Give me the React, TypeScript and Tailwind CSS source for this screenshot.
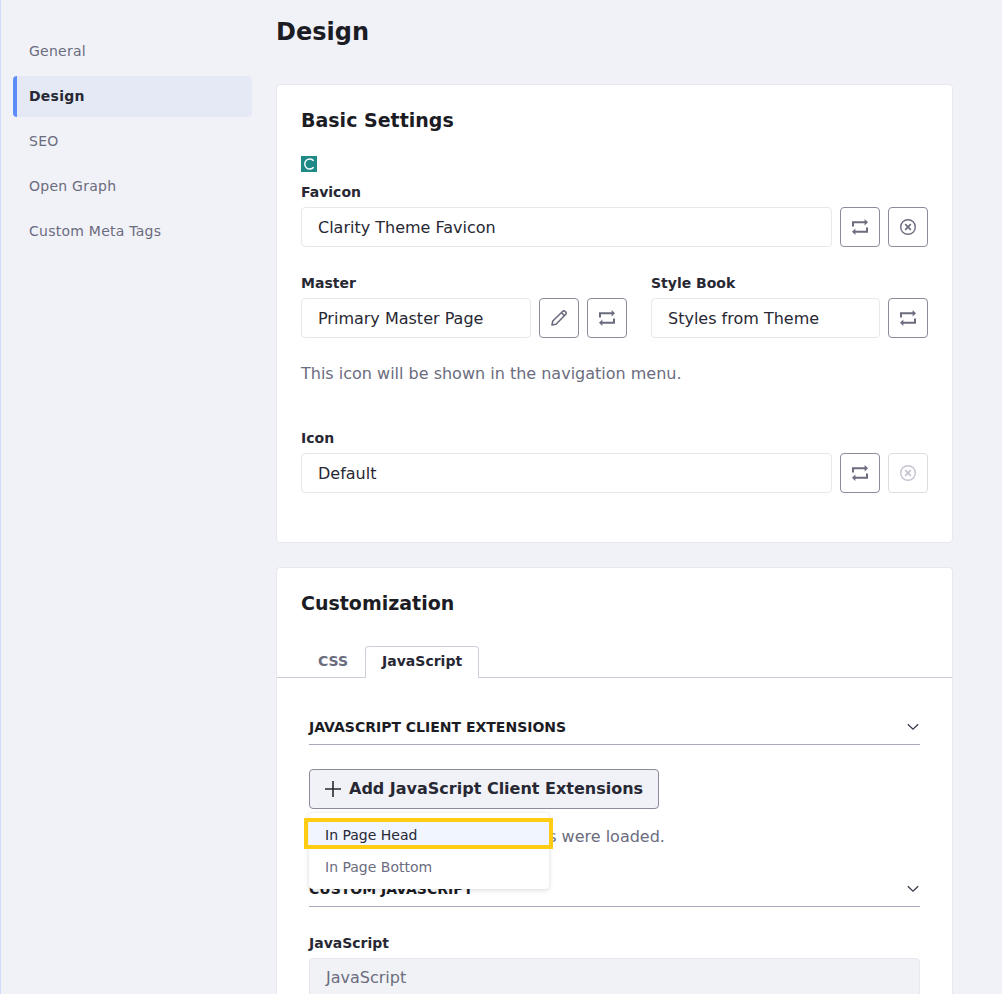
const font = { fontFamily: '"DejaVu Sans", sans-serif' };

function Change() {
  return (
    <svg width="16" height="16" viewBox="0 0 16 16" fill="none">
      <path d="M1 7.5V3.2H13.5" stroke="#6b6c7e" strokeWidth="2" />
      <path d="M12.6 0 L16 3.2 L12.6 6.4Z" fill="#6b6c7e" />
      <path d="M15 8.5V12.8H2.5" stroke="#6b6c7e" strokeWidth="2" />
      <path d="M3.4 9.6 L0 12.8 L3.4 16Z" fill="#6b6c7e" />
    </svg>
  );
}

function Times({ muted = false }: { muted?: boolean }) {
  const c = muted ? "#c4c4cf" : "#6b6c7e";
  return (
    <svg width="16" height="16" viewBox="0 0 16 16" fill="none" stroke={c} strokeWidth="1.4">
      <circle cx="8" cy="8" r="7.3" />
      <path d="M5.2 5.2 L10.8 10.8 M10.8 5.2 L5.2 10.8" strokeWidth="1.7" />
    </svg>
  );
}

function Pencil() {
  return (
    <svg width="16" height="16" viewBox="0 0 16 16" fill="none" stroke="#6b6c7e" strokeWidth="1.6" strokeLinejoin="round">
      <path d="M1 15 L1.8 11 L11.8 1.2 Q12.8 0.4 13.9 1.3 L14.9 2.3 Q15.6 3.3 14.8 4.2 L5 14.2 Z" />
      <path d="M10.5 2.8 L13.3 5.6" />
    </svg>
  );
}

function Chevron() {
  return (
    <svg width="12" height="12" viewBox="0 0 12 12" fill="none" stroke="#393a4a" strokeWidth="1.3" className="mr-px">
      <path d="M0.8 3.2 L6 8.2 L11.2 3.2" />
    </svg>
  );
}

function IconBtn({ children, disabled = false }: { children: React.ReactNode; disabled?: boolean }) {
  return (
    <button
      className={
        "flex h-10 w-10 shrink-0 items-center justify-center rounded border bg-white " +
        (disabled ? "border-[#dcdce3]" : "border-[#8e8a9c]")
      }
    >
      {children}
    </button>
  );
}

function Label({ children }: { children: React.ReactNode }) {
  return <div className="mb-[7px] h-[15px] text-sm leading-[15px] font-bold text-[#272833]">{children}</div>;
}

function Field({ children, className = "" }: { children: React.ReactNode; className?: string }) {
  return (
    <div
      className={
        "flex h-10 min-w-0 items-center rounded border border-[#e7e7ed] bg-white px-4 pt-px text-base text-[#272833] " + className
      }
    >
      {children}
    </div>
  );
}

function SectionHead({ children }: { children: React.ReactNode }) {
  return (
    <div className="flex h-[34px] items-center justify-between border-b border-[#a7a9bc] pb-[2px]">
      <span className="text-sm leading-4 font-bold text-[#1c1c24]">{children}</span>
      <Chevron />
    </div>
  );
}

const nav = ["General", "Design", "SEO", "Open Graph", "Custom Meta Tags"];

export default function App() {
  return (
    <div style={font} className="flex h-[994px] overflow-hidden border-l border-[#cfdcfb] bg-[#f1f2f7]">
      <nav className="ml-3 flex w-[239px] shrink-0 flex-col gap-1 pt-[31px]">
        {nav.map((n) => (
          <div
            key={n}
            className={
              "flex h-[41px] items-center rounded pb-[2px] text-sm tracking-[0.25px] " +
              (n === "Design"
                ? "border-l-4 border-[#5c8dfb] bg-[#e4e9f5] pl-3 font-bold tracking-[0.2px] text-[#272833]"
                : "pl-4 text-[#6b6c7e]")
            }
          >
            {n}
          </div>
        ))}
      </nav>
      <main className="ml-6 w-[677px] shrink-0">
        <h1 className="mt-[18px] mb-[10px] h-[56px] text-2xl leading-[28px] font-bold text-[#1c1c24]">Design</h1>
        <section className="h-[459px] rounded border border-[#e7e7ed] bg-white px-6 pt-6">
          <h2 className="text-[19px] leading-[22px] font-bold text-[#1c1c24]">Basic Settings</h2>
          <div className="mt-[25px] flex h-4 w-4 items-center justify-center bg-[#1e8a87]">
            <svg width="12" height="12" viewBox="0 0 12 12" fill="none" stroke="#fff" strokeWidth="1.4">
              <path d="M10.6 2.8 A5 5 0 1 0 10.6 9.2" />
            </svg>
          </div>
          <div className="mt-[13px]">
            <Label>Favicon</Label>
          </div>
          <div className="flex gap-2">
            <Field className="flex-1">Clarity Theme Favicon</Field>
            <IconBtn><Change /></IconBtn>
            <IconBtn><Times /></IconBtn>
          </div>
          <div className="mt-[29px] flex gap-6">
            <div className="w-[326px]">
              <Label>Master</Label>
              <div className="flex gap-2">
                <Field className="flex-1">Primary Master Page</Field>
                <IconBtn><Pencil /></IconBtn>
                <IconBtn><Change /></IconBtn>
              </div>
            </div>
            <div className="flex-1">
              <Label>Style Book</Label>
              <div className="flex gap-2">
                <Field className="flex-1">Styles from Theme</Field>
                <IconBtn><Change /></IconBtn>
              </div>
            </div>
          </div>
          <p className="mt-[25px] text-base leading-[22px] text-[#6b6c7e]">This icon will be shown in the navigation menu.</p>
          <div className="mt-[46px]">
            <Label>Icon</Label>
          </div>
          <div className="flex gap-2">
            <Field className="flex-1">Default</Field>
            <IconBtn><Change /></IconBtn>
            <IconBtn disabled><Times muted /></IconBtn>
          </div>
        </section>
        <section className="mt-6 rounded border border-[#e7e7ed] bg-white pt-6 pb-10">
          <h2 className="px-6 text-[19px] leading-[22px] font-bold text-[#1c1c24]">Customization</h2>
          <div className="mt-[32px] flex h-8 border-b border-[#cdced9] px-6 text-sm font-bold">
            <div className="flex h-8 items-center px-[17px] pb-[3px] text-[#6b6c7e]">CSS</div>
            <div className="flex h-8 items-center rounded-t border border-b-0 border-[#cdced9] bg-white px-4 pb-[3px] text-[#272833]">JavaScript</div>
          </div>
          <div className="px-8 pt-[33px]">
            <SectionHead>JAVASCRIPT CLIENT EXTENSIONS</SectionHead>
            <div className="relative pt-6">
              <button className="flex h-10 items-center gap-2 rounded border border-[#8e8a9c] bg-[#f1f2f7] px-[15px] text-base font-bold text-[#272833]">
                <svg width="16" height="16" viewBox="0 0 16 16" stroke="#272833" strokeWidth="1.6">
                  <path d="M8 0 V16 M0 8 H16" />
                </svg>
                Add JavaScript Client Extensions
              </button>
              <p className="mt-[17px] text-base leading-[22px] text-[#6b6c7e]">No JavaScript client extensions were loaded.</p>
              <div className="absolute top-[68px] left-0 z-10 h-[76px] w-[240px] rounded bg-white py-[5px] text-sm shadow-[0_1px_5px_rgba(0,0,0,0.16)]">
                <div className="relative flex h-[31px] items-center bg-[#f0f5ff] px-4 pt-[3px] text-[#272833]">
                  In Page Head
                  <div className="absolute top-0 -right-[4px] bottom-0 -left-[5px] border-4 border-[#ffcc14]" />
                </div>
                <div className="flex h-[33px] items-center px-4 pt-[3px] text-[#6b6c7e]">In Page Bottom</div>
              </div>
            </div>
            <div className="mt-[25px]">
              <SectionHead>CUSTOM JAVASCRIPT</SectionHead>
            </div>
            <div className="mt-[29px]">
              <Label>JavaScript</Label>
            </div>
            <div className="flex h-10 items-center rounded border border-[#e7e7ed] bg-[#f1f2f5] px-4 text-base text-[#6b6c7e]">JavaScript</div>
          </div>
        </section>
      </main>
    </div>
  );
}
